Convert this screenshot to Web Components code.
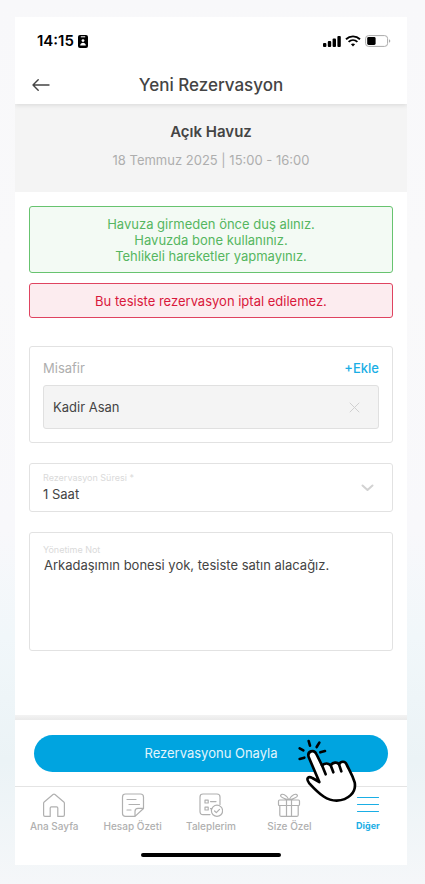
<!DOCTYPE html>
<html lang="tr">
<head>
<meta charset="utf-8">
<meta name="viewport" content="width=device-width, initial-scale=1">
<title>Yeni Rezervasyon</title>
<style>
  body {
    margin: 0;
    font-family: Inter, "Liberation Sans", sans-serif;
    color: #444;
    background: linear-gradient(180deg, #f8f8fa 0%, #f9f9fa 30%, #f8f8fb 60%, #f1f7fa 72%, #ebf3f6 86%, #f5f7f9 100%);
    --accent: #00a4e0;
    --line: #e2e2e2;
    --muted: #aeaeae;
  }
</style>
</head>
<body>
<reservation-page></reservation-page>

<script>
const define = (name, html) => {
  const template = document.createElement('template');
  template.innerHTML = html;
  customElements.define(name, class extends HTMLElement {
    constructor() {
      super();
      this.attachShadow({ mode: 'open' }).append(template.content.cloneNode(true));
    }
  });
};

define('status-bar', `
<style>
  :host { display: flex; align-items: center; justify-content: space-between; height: 48px; padding: 0 16px 0 22px; color: #000; }
  div { display: flex; align-items: center; gap: 4px; }
  time { font-size: 15px; font-weight: 600; line-height: 20px; }
  svg { display: block; }
</style>
<div>
  <time>14:15</time>
  <svg width="10" height="13" viewBox="0 0 10 13" aria-hidden="true"><rect width="10" height="13" rx="2"/><path d="M3.2 1.8h3.6" stroke="#fff" stroke-linecap="round"/><circle cx="5" cy="5.6" r="1.4" fill="#fff"/><path d="M2.2 10.6c0-3.8 5.6-3.8 5.6 0z" fill="#fff"/></svg>
</div>
<div>
  <svg width="18" height="11" viewBox="0 0 18 11" aria-hidden="true"><rect y="7" width="3.4" height="4" rx="1"/><rect x="4.8" y="5" width="3.4" height="6" rx="1"/><rect x="9.6" y="2.6" width="3.4" height="8.4" rx="1"/><rect x="14.4" width="3.4" height="11" rx="1"/></svg>
  <svg width="16" height="12" viewBox="0 0 16 12" fill="none" stroke="#000" stroke-width="1.9" aria-hidden="true"><path d="M1 4.2c4-3.8 10-3.8 14 0M3.6 6.9c2.6-2.4 6.2-2.4 8.800 0"/><path d="M5.900 9.200c1.200-1 3-1 4.200 0L8 11.500z" fill="#000" stroke="none"/></svg>
  <svg width="26" height="12" viewBox="0 0 26 12" aria-hidden="true"><rect x=".6" y=".6" width="22" height="10.800" rx="3" fill="none" stroke="#aaa"/><rect x="2.200" y="2" width="8.400" height="8" rx="1.400"/><path d="M24.200 4.200c1.400.6 1.400 3 0 3.600z" fill="#999"/></svg>
</div>`);

define('page-header', `
<style>
  :host { display: grid; grid-template-columns: 52px 1fr 52px; align-items: center; height: 39px; background: #fff; box-shadow: 0 1px 5px rgba(0,0,0,.12); position: relative; z-index: 1; clip-path: inset(0 0 -8px 0); }
  button { border: 0; background: none; padding: 4px 16px; line-height: 0; }
  h1 { margin: 0; text-align: center; font-size: 17px; line-height: 24px; font-weight: 500; }
</style>
<button aria-label="Geri"><svg width="18" height="12" viewBox="0 0 18 12" fill="none" stroke="#444" stroke-width="1.400" stroke-linecap="round" stroke-linejoin="round"><path d="M17 6H1M6.200.8 1 6l5.200 5.200"/></svg></button>
<h1><slot></slot></h1>`);

define('facility-summary', `
<style>
  :host { display: block; padding: 16px 16px 20px; text-align: center; background: #f4f4f4; }
  h2 { margin: 0; font-size: 15px; line-height: 24px; font-weight: 600; }
  p { margin: 4px 0 0; font-size: 13px; line-height: 24px; color: var(--muted); }
</style>
<h2><slot name="name"></slot></h2><p><slot></slot></p>`);

define('notice-box', `
<style>
  :host { display: block; box-sizing: border-box; padding: 9px 16px 8px; border: 1px solid #67c36f; border-radius: 3px; background: #f3faf4; color: #55b660; text-align: center; font-size: 13px; line-height: 16px; }
  :host([kind="error"]) { border-color: #df4360; background: #fcecef; color: #d9183b; }
</style>
<slot></slot>`);

define('guest-card', `
<style>
  :host { display: flex; flex-direction: column; gap: 6px; padding: 11px 13px 13px; border: 1px solid var(--line); border-radius: 3px; }
  header, .guest { display: flex; align-items: center; justify-content: space-between; }
  header { font-size: 13px; line-height: 21px; color: var(--muted); }
  button { font: inherit; border: 0; background: none; padding: 0; color: #1aaee5; line-height: inherit; }
  .add { font-weight: 500; }
  .guest { border: 1px solid #e0e0e0; border-radius: 3px; background: #f4f4f4; padding: 10px 18px 10px 9px; font-size: 13px; line-height: 22px; }
  .remove { display: flex; }
</style>
<header><span>Misafir</span><button class="add">+Ekle</button></header>
<div class="guest"><slot></slot><button class="remove" aria-label="Misafiri kaldır"><svg width="11" height="11" viewBox="0 0 11 11" fill="none" stroke="#d0d0d0" stroke-linecap="round"><path d="m1 1 9 9M10 1l-9 9"/></svg></button></div>`);

define('duration-field', `
<style>
  :host { display: grid; grid-template-columns: 1fr auto; align-items: center; padding: 8px 18px 7px 13px; border: 1px solid var(--line); border-radius: 3px; }
  label { display: block; font-size: 9px; line-height: 12px; color: #dadada; }
  select { display: block; width: 100%; appearance: none; border: 0; padding: 0; margin: 0; background: none; font: 13px/20px Inter, "Liberation Sans", sans-serif; height: 20px; color: #444; }
</style>
<div><label for="duration">Rezervasyon Süresi *</label>
<select id="duration"><option>1 Saat</option></select></div>
<svg width="13" height="8" viewBox="0 0 13 8" fill="none" stroke="#d2d2d2" stroke-width="2" stroke-linecap="round" stroke-linejoin="round" aria-hidden="true"><path d="m1.500 1.500 5 4.500 5-4.500"/></svg>`);

define('note-field', `
<style>
  :host { display: block; padding: 11px 13px 8px; border: 1px solid var(--line); border-radius: 3px; }
  label { display: block; font-size: 9px; line-height: 12px; color: #dadada; }
  textarea { display: block; box-sizing: border-box; width: 100%; height: 86px; resize: none; border: 0; margin: 0; padding: 0 1px; background: none; font: 13px/18px Inter, "Liberation Sans", sans-serif; color: #444; }
</style>
<label for="note">Yönetime Not</label>
<textarea id="note">Arkadaşımın bonesi yok, tesiste satın alacağız.</textarea>`);

define('pointer-hand', `
<style>
  :host { display: block; pointer-events: none; }
  svg { display: block; }
</style>
<svg width="80" height="75" viewBox="0 0 240 225" fill="none" stroke="#000" stroke-width="8" stroke-linecap="round" stroke-linejoin="round" aria-hidden="true">
  <path d="M29 40l11 6M56 18l4 14M88 23l-8 13M91 52l14-4M29 72l14-4"/>
  <path fill="#fff" d="M56 66C51 48 72 42 79 57L96 91C104 84 115 84 122 91C128 81 142 80 147 88C153 77 166 78 170 89C177 104 187 119 194 142C200 173 174 195 140 197C112 197 91 181 58 145C46 130 56 122 67 129L88 141Z"/>
  <path d="M96 91l11 27M122 91l8 21M147 88l7 21"/>
</svg>`);

define('action-bar', `
<style>
  :host { display: block; position: relative; z-index: 2; background: #fff; }
  .edge { height: 5px; background: linear-gradient(#f3f3f3, #eaeaea); }
  .content { padding: 15px 19px 14px; }
  button { display: block; width: 100%; border: 0; border-radius: 19px; padding: 8px 16px; background: var(--accent); color: #e2f5fc; font: 13px/21px Inter, "Liberation Sans", sans-serif; }
  pointer-hand { position: absolute; top: 20px; right: 37px; }
</style>
<div class="edge"></div>
<div class="content"><button><slot></slot></button></div>
<pointer-hand></pointer-hand>`);

define('tab-item', `
<style>
  :host { flex: 1 1 0; min-width: 0; }
  a { display: flex; flex-direction: column; align-items: center; gap: 2px; color: #b0b0b0; text-decoration: none; font-size: 10px; font-weight: 500; line-height: 12px; white-space: nowrap; }
  :host([active]) a { color: #1aaee5; font-size: 9px; font-weight: 700; }
</style>
<a href="#"><slot name="icon"></slot><span><slot></slot></span></a>`);

define('tab-bar', `
<style>
  :host { display: block; background: #fff; border-top: 1px solid #e4e4e4; }
  nav { display: flex; padding-top: 5px; }
  svg { display: block; fill: none; stroke: currentColor; stroke-width: 1.200; stroke-linecap: round; stroke-linejoin: round; }
  .home { width: 140px; height: 4px; border-radius: 2px; background: #000; margin: 21px auto 8px; }
</style>
<nav>
  <tab-item><svg slot="icon" width="24" height="26" viewBox="0 0 24 26"><path d="M3 24.400h5.200V16q0-1.200 1.200-1.200h5.200q1.200 0 1.200 1.200v8.400H21q1.400 0 1.400-1.400V11.300q0-.8-.6-1.300L13 2.500q-1-.8-2 0L2.200 10q-.6.5-.6 1.300V23q0 1.400 1.400 1.400z"/></svg>Ana Sayfa</tab-item>
  <tab-item><svg slot="icon" width="24" height="26" viewBox="0 0 24 26"><path d="M14 24.400H4.500q-3 0-3-3V5q0-3 3-3h15q3 0 3 3v11.500L14 24.400v-5q0-3 3-3h5.500M6 7.500h9M8 12.500h10.500M6 18h4"/></svg>Hesap Özeti</tab-item>
  <tab-item><svg slot="icon" width="24" height="26" viewBox="0 0 24 26"><path d="M11 22.600H4q-3 0-3-3V5q0-3 3-3h14q3 0 3 3v7.500M6 8.200h3.200v2.800H6zM6 15.200h3.200V18H6zM11.500 9.600H17M11.500 16.600h1.500"/><circle cx="18" cy="18.800" r="5.600"/><path d="m15.600 19 1.700 1.700 3.200-3.300"/></svg>Taleplerim</tab-item>
  <tab-item><svg slot="icon" width="24" height="26" viewBox="0 0 24 26"><path d="M2.500 8h19q1 0 1 1v3.500q0 1-1 1h-19q-1 0-1-1V9q0-1 1-1zM2.800 13.500v9.400q0 1.500 1.500 1.500h15.400q1.500 0 1.500-1.500v-9.400M9.500 8v16.400M14.500 8v16.400M12 8C8 7 3.500 6 3.500 3.600 4.500.8 10 2.500 12 8zM12 8c4-1 8.500-2 8.500-4.400C19.500.8 14 2.500 12 8z"/></svg>Size Özel</tab-item>
  <tab-item active><svg slot="icon" width="24" height="26" viewBox="0 0 24 26"><path d="M1.500 5.500h21M1.500 12.500h21M1.500 19.500h21"/></svg>Diğer</tab-item>
</nav>
<div class="home"></div>`);

define('reservation-page', `
<style>
  :host { display: flex; box-sizing: border-box; min-height: 100vh; padding: 17px 18px 19px 15px; }
  .screen { flex: 1; min-width: 0; display: flex; flex-direction: column; background: #fff; }
  main { flex: 1; display: flex; flex-direction: column; }
  .notices { display: flex; flex-direction: column; gap: 10px; padding: 14px 14px 28px; }
  form { display: flex; flex-direction: column; gap: 20px; padding: 0 14px 24px; }
</style>
<div class="screen">
  <status-bar></status-bar>
  <page-header>Yeni Rezervasyon</page-header>
  <main>
    <facility-summary><span slot="name">Açık Havuz</span>18 Temmuz 2025 | 15:00 - 16:00</facility-summary>
    <div class="notices">
      <notice-box>Havuza girmeden önce duş alınız.<br>Havuzda bone kullanınız.<br>Tehlikeli hareketler yapmayınız.</notice-box>
      <notice-box kind="error">Bu tesiste rezervasyon iptal edilemez.</notice-box>
    </div>
    <form>
      <guest-card>Kadir Asan</guest-card>
      <duration-field></duration-field>
      <note-field></note-field>
    </form>
  </main>
  <action-bar>Rezervasyonu Onayla</action-bar>
  <tab-bar></tab-bar>
</div>`);
</script>
</body>
</html>
